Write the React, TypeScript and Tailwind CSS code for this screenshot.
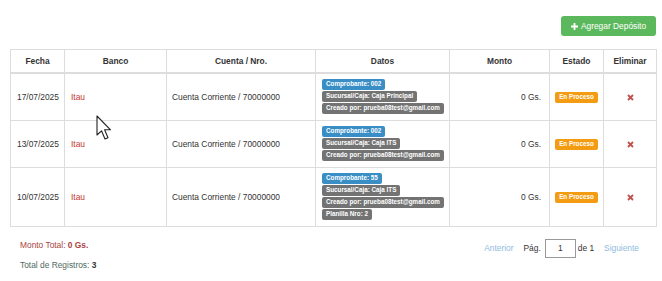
import React from "react";

const rows = [
  {
    fecha: "17/07/2025",
    banco: "Itau",
    cuenta: "Cuenta Corriente / 70000000",
    datos: [
      { t: "Comprobante: 002", c: "bg-[#3a8ec6]" },
      { t: "Sucursal/Caja: Caja Principal", c: "bg-[#737373]" },
      { t: "Creado por: prueba08test@gmail.com", c: "bg-[#737373]" },
    ],
  },
  {
    fecha: "13/07/2025",
    banco: "Itau",
    cuenta: "Cuenta Corriente / 70000000",
    datos: [
      { t: "Comprobante: 002", c: "bg-[#3a8ec6]" },
      { t: "Sucursal/Caja: Caja ITS", c: "bg-[#737373]" },
      { t: "Creado por: prueba08test@gmail.com", c: "bg-[#737373]" },
    ],
  },
  {
    fecha: "10/07/2025",
    banco: "Itau",
    cuenta: "Cuenta Corriente / 70000000",
    datos: [
      { t: "Comprobante: 55", c: "bg-[#3a8ec6]" },
      { t: "Sucursal/Caja: Caja ITS", c: "bg-[#737373]" },
      { t: "Creado por: prueba08test@gmail.com", c: "bg-[#737373]" },
      { t: "Planilla Nro: 2", c: "bg-[#737373]" },
    ],
  },
];

export default function App() {
  return (
    <div
      className="relative w-[662px] h-[281px] bg-white text-[#333] text-[8.4px] leading-[12px] overflow-hidden"
      style={{ fontFamily: '"Liberation Sans", Arial, sans-serif' }}
    >
      <div className="pt-[16px] pl-[10px] pr-[6px]">
        <div className="flex justify-end mb-[13px]">
          <button className="flex items-center justify-center gap-[3px] w-[95px] h-[20px] rounded-[3px] bg-[#5cb85c] text-white text-[8.4px]">
            <svg width="7" height="7" viewBox="0 0 7 7">
              <path d="M2.6 0h1.8v2.6H7v1.8H4.4V7H2.6V4.4H0V2.6h2.6z" fill="white" />
            </svg>
            <span>Agregar Depósito</span>
          </button>
        </div>
        <table className="w-[646px] table-fixed border-collapse border border-[#ddd]">
          <colgroup>
            <col className="w-[54px]" />
            <col className="w-[102px]" />
            <col className="w-[149px]" />
            <col className="w-[134px]" />
            <col className="w-[100px]" />
            <col className="w-[54px]" />
            <col className="w-[53px]" />
          </colgroup>
          <thead>
            <tr className="h-[23px]">
              {["Fecha", "Banco", "Cuenta / Nro.", "Datos", "Monto", "Estado", "Eliminar"].map((h) => (
                <th
                  key={h}
                  className="border border-[#ddd] border-b-2 text-center font-bold px-[4px] py-0 align-middle"
                >
                  {h}
                </th>
              ))}
            </tr>
          </thead>
          <tbody>
            {rows.map((r, i) => (
              <tr key={i}>
                <td className="border border-[#ddd] px-[6px] py-[5px] align-middle whitespace-nowrap">{r.fecha}</td>
                <td className="border border-[#ddd] px-[6px] py-[5px] align-middle text-[#c0392b]">{r.banco}</td>
                <td className="border border-[#ddd] px-[5px] py-[5px] align-middle whitespace-nowrap">{r.cuenta}</td>
                <td className="border border-[#ddd] px-[6px] py-[5px] align-middle">
                  {r.datos.map((d) => (
                    <div key={d.t} className="h-[12px] flex items-center">
                      <span
                        className={`${d.c} inline-block text-white font-bold text-[6.3px] leading-none px-[4px] pt-[2px] pb-[2.5px] rounded-[2px] whitespace-nowrap`}
                      >
                        {d.t}
                      </span>
                    </div>
                  ))}
                </td>
                <td className="border border-[#ddd] pl-[5px] pr-[8px] py-[5px] align-middle text-right">0 Gs.</td>
                <td className="border border-[#ddd] px-[2px] py-[5px] align-middle text-center">
                  <span className="inline-block bg-[#f39c12] text-white font-bold text-[6.3px] leading-none px-[4px] pt-[2px] pb-[2.5px] rounded-[2px] whitespace-nowrap">
                    En Proceso
                  </span>
                </td>
                <td className="border border-[#ddd] px-[2px] py-[5px] align-middle text-center">
                  <svg width="7" height="7" viewBox="0 0 7 7" className="inline-block">
                    <path d="M1 1L6 6M6 1L1 6" stroke="#c0504d" strokeWidth="1.8" />
                  </svg>
                </td>
              </tr>
            ))}
          </tbody>
        </table>
        <div className="flex justify-between items-start">
          <div className="pl-[10px] pt-[12px]">
            <p className="text-[#a94442]">
              Monto Total: <b>0 Gs.</b>
            </p>
            <p className="mt-[8px] text-[#4f6a60]">
              Total de Registros: <b className="text-[#333]">3</b>
            </p>
          </div>
          <div className="flex items-center pt-[12px] pr-[17px]">
            <span className="text-[#8fbbe0]">Anterior</span>
            <span className="ml-[10px]">Pág.</span>
            <span className="ml-[4px] w-[31px] h-[19px] border border-[#999] flex items-center justify-center">1</span>
            <span className="ml-[2px]">de 1</span>
            <span className="ml-[10px] text-[#8fbbe0]">Siguiente</span>
          </div>
        </div>
      </div>
      <svg
        className="absolute left-[96px] top-[115px]"
        width="16"
        height="26"
        viewBox="0 0 16 26"
      >
        <path
          d="M1 1L1 20L5.5 15.8L9 24L12 22.7L8.6 14.8L14.5 14.8Z"
          fill="white"
          stroke="#222"
          strokeWidth="1.1"
          strokeLinejoin="round"
        />
      </svg>
    </div>
  );
}
